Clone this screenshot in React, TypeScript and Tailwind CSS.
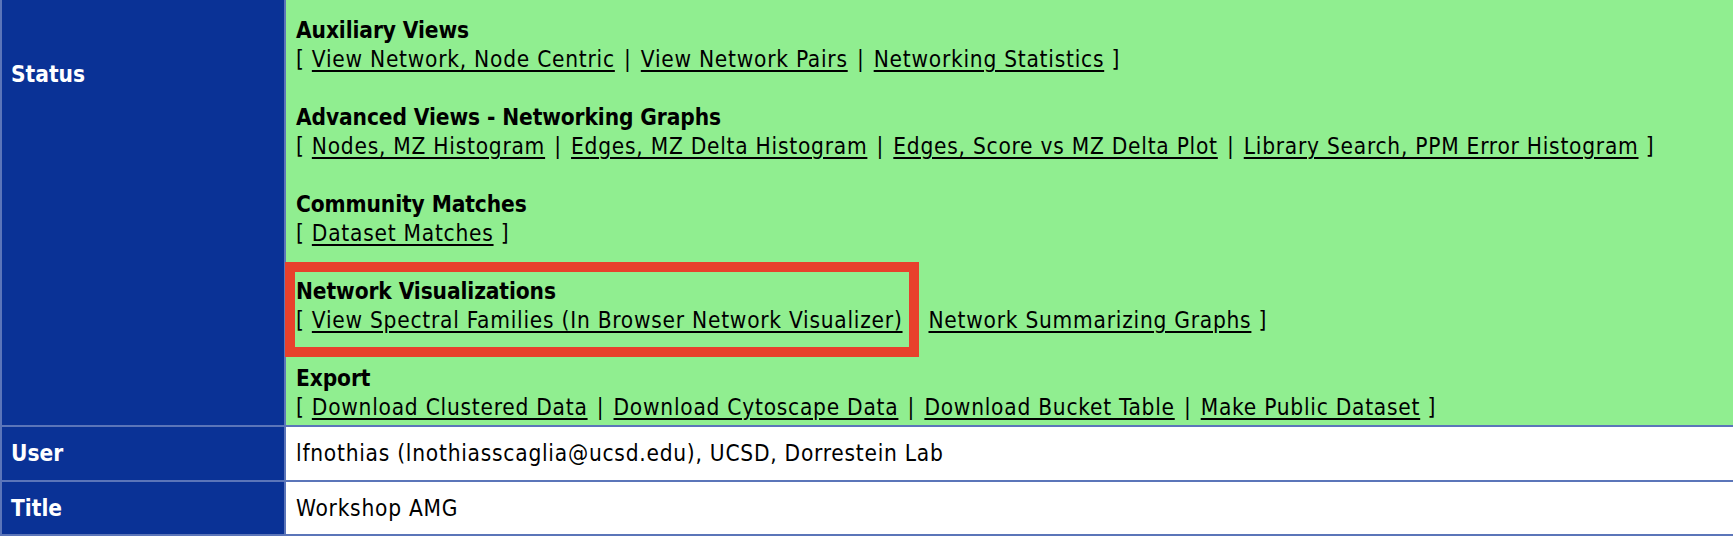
import { Fragment } from "react"

const sections = [
  {
    title: "Auxiliary Views",
    links: ["View Network, Node Centric", "View Network Pairs", "Networking Statistics"],
  },
  {
    title: "Advanced Views - Networking Graphs",
    links: [
      "Nodes, MZ Histogram",
      "Edges, MZ Delta Histogram",
      "Edges, Score vs MZ Delta Plot",
      "Library Search, PPM Error Histogram",
    ],
  },
  {
    title: "Community Matches",
    links: ["Dataset Matches"],
  },
  {
    title: "Network Visualizations",
    links: ["View Spectral Families (In Browser Network Visualizer)", "Network Summarizing Graphs"],
  },
  {
    title: "Export",
    links: ["Download Clustered Data", "Download Cytoscape Data", "Download Bucket Table", "Make Public Dataset"],
  },
]

function LinkRow({ links }: { links: string[] }) {
  return (
    <div className="whitespace-nowrap">
      [{" "}
      {links.map((label, i) => (
        <Fragment key={label}>
          {i > 0 && (
            <>
              {" "}
              <span className="px-[2px]">|</span>{" "}
            </>
          )}
          <a href="#" className="text-black underline decoration-2 underline-offset-[3px]">
            {label}
          </a>
        </Fragment>
      ))}{" "}
      ]
    </div>
  )
}

export default function App() {
  return (
    <div className="w-[1733px] h-[536px] overflow-hidden bg-white font-['DejaVu_Sans_Condensed','DejaVu_Sans',sans-serif] text-[22.5px] leading-[29px] tracking-[0.75px] text-black">
      <div className="grid grid-cols-[282px_1fr] grid-rows-[425px_53px_52px] gap-[2px] bg-[#5b75b9] pl-[2px] pb-[2px]">
        {/* status */}
        <div className="bg-[#0a3296] pl-[9px] pt-[60px] font-bold tracking-normal text-white">Status</div>
        <div className="relative bg-[#90ee90] pl-[10px] pt-[16px]">
          {sections.map((s, i) => (
            <div key={s.title} className={i < sections.length - 1 ? "mb-[29px]" : ""}>
              <div className="font-bold tracking-[-0.1px]">{s.title}</div>
              <LinkRow links={s.links} />
            </div>
          ))}
          <div className="absolute left-[-1px] top-[262px] w-[634px] h-[95px] border-[10px] border-[#e8412c]" />
        </div>

        {/* user */}
        <div className="flex items-center bg-[#0a3296] pl-[9px] font-bold tracking-normal text-white">User</div>
        <div className="flex items-center bg-white pl-[10px]">
          lfnothias (lnothiasscaglia@ucsd.edu), UCSD, Dorrestein Lab
        </div>

        {/* title */}
        <div className="flex items-center bg-[#0a3296] pl-[9px] font-bold tracking-normal text-white">Title</div>
        <div className="flex items-center bg-white pl-[10px]">Workshop AMG</div>
      </div>
    </div>
  )
}
